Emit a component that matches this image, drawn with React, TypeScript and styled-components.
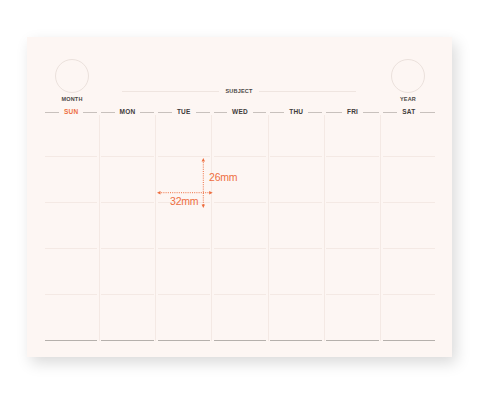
import * as React from "react";
import styled, { createGlobalStyle } from "styled-components";

const CARD_BG = "#fdf6f3";
const ACCENT = "#ee6e3f";
const INK = "#3f3b3a";
const FAINT = "#f4e9e4";

const DAYS = ["SUN", "MON", "TUE", "WED", "THU", "FRI", "SAT"];
const CELL_HEIGHTS = [41, 46, 46, 46, 46];

const GlobalStyle = createGlobalStyle`
  html, body {
    margin: 0;
    padding: 0;
    background: #ffffff;
  }
  body {
    font-family: "Liberation Sans", Arial, sans-serif;
  }
`;

const PageStyled = styled.div`
  box-sizing: border-box;
  width: 480px;
  height: 397px;
  padding: 37px 0 0 27px;
`;

const CardStyled = styled.div`
  position: relative;
  box-sizing: border-box;
  width: 425px;
  height: 320px;
  padding: 22px 17px 0 18px;
  background: ${CARD_BG};
  box-shadow: 4px 6px 14px rgba(0, 0, 0, 0.15);
`;

const TopRowStyled = styled.div`
  display: flex;
  align-items: flex-start;
`;

const DialBlockStyled = styled.div`
  width: 54px;
  display: flex;
  flex-direction: column;
  align-items: center;
`;

const CircleStyled = styled.div`
  box-sizing: border-box;
  width: 34px;
  height: 34px;
  border-radius: 50%;
  border: 1px solid #ebe1dc;
`;

const TinyLabelStyled = styled.span<{ $inline?: boolean }>`
  margin-top: ${(p) => (p.$inline ? 0 : 3)}px;
  font-size: 5.5px;
  line-height: 7px;
  font-weight: 700;
  letter-spacing: 0.2px;
  color: #4a4644;
`;

const SubjectStyled = styled.div`
  flex: 1;
  display: flex;
  align-items: center;
  gap: 6px;
  margin-top: 28.5px;
  padding: 0 25px 0 23px;
`;

const SubjectRuleStyled = styled.div`
  flex: 1;
  height: 1px;
  background: #efe5e0;
`;

const GridStyled = styled.div`
  margin-top: 5px;
  display: grid;
  grid-template-columns: repeat(6, 1fr 1px) 1fr;
  column-gap: 1.5px;
`;

const ColumnStyled = styled.div`
  display: flex;
  flex-direction: column;
`;

const DayHeadStyled = styled.div`
  height: 8px;
  display: flex;
  align-items: center;
  gap: 5px;
`;

const DashStyled = styled.div`
  flex: 1;
  height: 1px;
  background: #c8c1bd;
`;

const DayNameStyled = styled.span<{ $accent?: boolean }>`
  font-size: 6.5px;
  line-height: 8px;
  font-weight: 700;
  letter-spacing: 0.2px;
  color: ${(p) => (p.$accent ? ACCENT : INK)};
`;

const CellStyled = styled.div<{ $height: number; $last?: boolean }>`
  box-sizing: border-box;
  height: ${(p) => p.$height}px;
  border-bottom: ${(p) => (p.$last ? "1.5px solid #b5b0ac" : `1px solid ${FAINT}`)};
`;

const DividerStyled = styled.div`
  margin-top: 7px;
  width: 1px;
  background: ${FAINT};
`;

const MeasureStyled = styled.div`
  position: absolute;
  left: 123px;
  top: 113px;
  width: 95px;
  height: 65px;
`;

const MeasureTextStyled = styled.span<{ $left: number; $top: number }>`
  position: absolute;
  left: ${(p) => p.$left}px;
  top: ${(p) => p.$top}px;
  font-family: "Liberation Sans", Arial, sans-serif;
  font-size: 10.5px;
  line-height: 13px;
  letter-spacing: -0.2px;
  color: ${ACCENT};
`;

function Measure() {
  return (
    <MeasureStyled>
      <svg width="95" height="65" viewBox="0 0 95 65" style={{ display: "block" }}>
        <g stroke={ACCENT} strokeWidth="1" strokeDasharray="1 1.2" fill="none">
          <line x1="9" y1="42.7" x2="60.7" y2="42.7" />
          <line x1="53.3" y1="10" x2="53.3" y2="56" />
        </g>
        <g fill={ACCENT}>
          <polygon points="7,42.7 10.5,41 10.5,44.4" />
          <polygon points="62.7,42.7 59.2,41 59.2,44.4" />
          <polygon points="53.3,8 51.6,11.5 55,11.5" />
          <polygon points="53.3,58 51.6,54.5 55,54.5" />
        </g>
      </svg>
      <MeasureTextStyled $left={59} $top={21}>
        26mm
      </MeasureTextStyled>
      <MeasureTextStyled $left={20} $top={45}>
        32mm
      </MeasureTextStyled>
    </MeasureStyled>
  );
}

export default function App() {
  return (
    <>
      <GlobalStyle />
      <PageStyled>
        <CardStyled>
          <TopRowStyled>
            <DialBlockStyled>
              <CircleStyled />
              <TinyLabelStyled>MONTH</TinyLabelStyled>
            </DialBlockStyled>
            <SubjectStyled>
              <SubjectRuleStyled />
              <TinyLabelStyled $inline>SUBJECT</TinyLabelStyled>
              <SubjectRuleStyled />
            </SubjectStyled>
            <DialBlockStyled>
              <CircleStyled />
              <TinyLabelStyled>YEAR</TinyLabelStyled>
            </DialBlockStyled>
          </TopRowStyled>
          <GridStyled>
            {DAYS.map((day, index) => (
              <React.Fragment key={day}>
                {index > 0 && <DividerStyled />}
                <ColumnStyled>
                  <DayHeadStyled>
                    <DashStyled />
                    <DayNameStyled $accent={index === 0}>{day}</DayNameStyled>
                    <DashStyled />
                  </DayHeadStyled>
                  {CELL_HEIGHTS.map((h, i) => (
                    <CellStyled key={i} $height={h} $last={i === CELL_HEIGHTS.length - 1} />
                  ))}
                </ColumnStyled>
              </React.Fragment>
            ))}
          </GridStyled>
          <Measure />
        </CardStyled>
      </PageStyled>
    </>
  );
}
